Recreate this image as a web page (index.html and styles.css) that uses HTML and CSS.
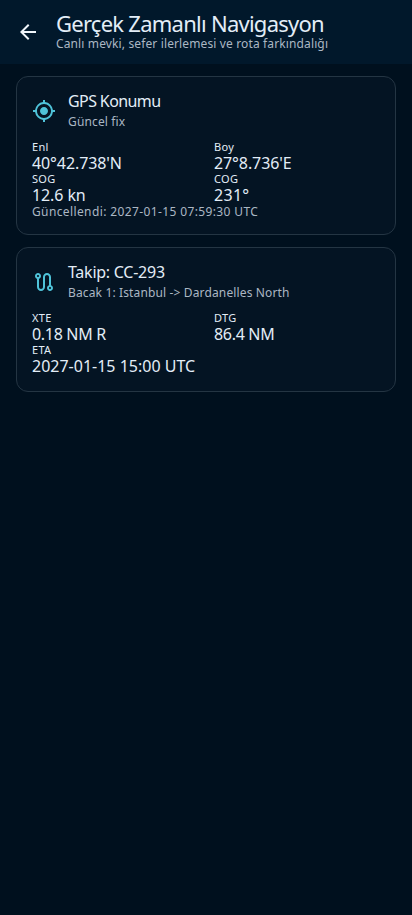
FILE: index.html
```html
<!DOCTYPE html>
<html lang="tr">
<head>
<meta charset="utf-8">
<meta name="viewport" content="width=device-width, initial-scale=1">
<title>Gerçek Zamanlı Navigasyon</title>
<link rel="stylesheet" href="styles.css">
</head>
<body>
<header class="bar">
  <svg class="back" viewBox="0 0 24 24"><path d="M20 11H7.83l5.59-5.59L12 4l-8 8 8 8 1.41-1.41L7.83 13H20v-2z"/></svg>
  <div class="heading">
    <h1>Gerçek Zamanlı Navigasyon</h1>
    <p class="sub">Canlı mevki, sefer ilerlemesi ve rota farkındalığı</p>
  </div>
</header>
<main>
  <section class="card">
    <div class="card-head">
      <svg class="icon" viewBox="0 0 24 24"><path d="M12 8c-2.21 0-4 1.79-4 4s1.79 4 4 4 4-1.79 4-4-1.79-4-4-4zm8.94 3A8.994 8.994 0 0 0 13 3.06V1h-2v2.06A8.994 8.994 0 0 0 3.06 11H1v2h2.06A8.994 8.994 0 0 0 11 20.94V23h2v-2.06A8.994 8.994 0 0 0 20.94 13H23v-2h-2.06zM12 19c-3.87 0-7-3.13-7-7s3.13-7 7-7 7 3.13 7 7-3.13 7-7 7z"/></svg>
      <div>
        <h2>GPS Konumu</h2>
        <p class="sub">Güncel fix</p>
      </div>
    </div>
    <dl class="grid">
      <div><dt>Enl</dt><dd>40°42.738'N</dd></div>
      <div><dt>Boy</dt><dd>27°8.736'E</dd></div>
      <div><dt>SOG</dt><dd>12.6 kn</dd></div>
      <div><dt>COG</dt><dd class="course">231°</dd></div>
    </dl>
    <p class="sub updated">Güncellendi: 2027-01-15 07:59:30 UTC</p>
  </section>
  <section class="card track">
    <div class="card-head">
      <svg class="icon" viewBox="0 0 24 24"><path d="M19 15.18V7c0-2.21-1.79-4-4-4s-4 1.79-4 4v10c0 1.1-.9 2-2 2s-2-.9-2-2V8.82C8.16 8.4 9 7.3 9 6c0-1.66-1.34-3-3-3S3 4.34 3 6c0 1.3.84 2.4 2 2.82V17c0 2.21 1.79 4 4 4s4-1.79 4-4V7c0-1.1.9-2 2-2s2 .9 2 2v8.18c-1.16.42-2 1.52-2 2.82 0 1.66 1.34 3 3 3s3-1.34 3-3c0-1.3-.84-2.4-2-2.82zM6 7c-.55 0-1-.45-1-1s.45-1 1-1 1 .45 1 1-.45 1-1 1zm12 12c-.55 0-1-.45-1-1s.45-1 1-1 1 .45 1 1-.45 1-1 1z"/></svg>
      <div>
        <h2 class="voyage">Takip: CC-293</h2>
        <p class="sub">Bacak 1: Istanbul -&gt; Dardanelles North</p>
      </div>
    </div>
    <dl class="grid">
      <div><dt>XTE</dt><dd class="distance">0.18 NM R</dd></div>
      <div><dt>DTG</dt><dd class="distance">86.4 NM</dd></div>
      <div class="wide"><dt>ETA</dt><dd class="eta">2027-01-15 15:00 UTC</dd></div>
    </dl>
  </section>
</main>
</body>
</html>
```
FILE: styles.css
```css
* { box-sizing: border-box; margin: 0; padding: 0; }
body {
  min-height: 915px;
  background: #00101e;
  color: #e3edf7;
  font-family: "Noto Sans", sans-serif;
}
.bar {
  height: 64px;
  display: flex;
  align-items: center;
  gap: 16px;
  padding-left: 16px;
  background: #01182b;
}
.back { width: 24px; height: 24px; fill: #f0f5fa; }
h1, h2 { font-weight: 400; white-space: nowrap; }
h1 { font-size: 22px; line-height: 24px; letter-spacing: -0.74px; margin: -2px 0 1px; }
.sub {
  color: #abb7c3;
  font-size: 12px;
  line-height: 16px;
  letter-spacing: 0.13px;
  white-space: nowrap;
}
main { display: flex; flex-direction: column; gap: 12px; padding: 12px 16px; }
.card {
  height: 159px;
  padding: 15px;
  background: #041423;
  border: 1px solid #243543;
  border-radius: 12px;
}
.track { height: 145px; }
.card-head { display: flex; align-items: center; gap: 12px; height: 38px; margin-bottom: 9px; }
.icon { width: 24px; height: 24px; fill: #4fc3d9; }
h2 { font-size: 16px; line-height: 22px; letter-spacing: -0.6px; margin: -3px 0 2px; }
.voyage { letter-spacing: -0.25px; }
.grid { display: grid; grid-template-columns: 1fr 1fr; column-gap: 16px; }
.wide { grid-column: 1 / -1; }
dt { font-size: 11px; line-height: 16px; letter-spacing: 0.3px; height: 16px; }
dd { font-size: 16px; line-height: 16px; letter-spacing: -0.1px; height: 16px; white-space: nowrap; }
.course { letter-spacing: 0.3px; }
.distance { letter-spacing: -0.32px; }
.eta { letter-spacing: 0; }
.updated { margin-top: 1px; letter-spacing: 0.38px; }
.card-head .sub { letter-spacing: 0.14px; }
```
